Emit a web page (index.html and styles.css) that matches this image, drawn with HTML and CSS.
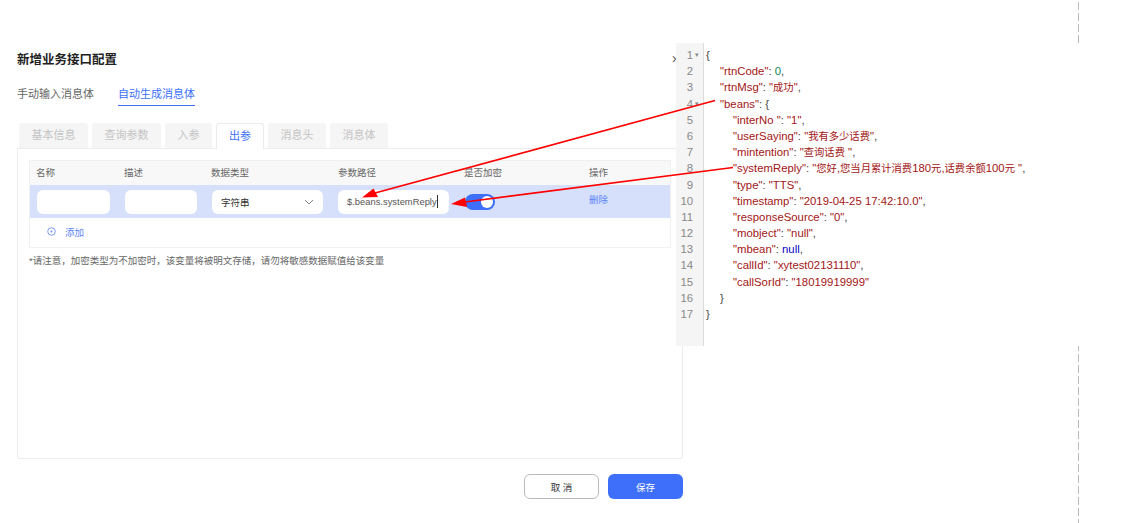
FILE: index.html
```html
<!DOCTYPE html>
<html lang="zh">
<head>
<meta charset="utf-8">
<title>新增业务接口配置</title>
<link rel="stylesheet" href="styles.css">
</head>
<body>
<div class="page">
  <main class="dialog">
    <h1 class="title">新增业务接口配置</h1>
    <nav class="mode-tabs">
      <span class="mode-tab">手动输入消息体</span>
      <span class="mode-tab active">自动生成消息体</span>
    </nav>
    <div class="step-tabs">
      <span class="step w69">基本信息</span>
      <span class="step w69">查询参数</span>
      <span class="step w47">入参</span>
      <span class="step w48 current">出参</span>
      <span class="step w58">消息头</span>
      <span class="step w58">消息体</span>
    </div>
    <section class="card">
      <div class="table">
        <div class="row head">
          <span class="cell">名称</span><span class="cell">描述</span><span class="cell">数据类型</span><span class="cell">参数路径</span><span class="cell">是否加密</span><span class="cell">操作</span>
        </div>
        <div class="row body-row">
          <span class="cell"><span class="input w73"></span></span>
          <span class="cell"><span class="input w72"></span></span>
          <span class="cell"><span class="input select">字符串<svg class="chev" width="10" height="6" viewBox="0 0 10 6"><path d="M1 1l4 4 4-4" fill="none" stroke="#888" stroke-width="1"/></svg></span></span>
          <span class="cell"><span class="input path">$.beans.systemReply<i class="caret"></i></span></span>
          <span class="cell"><span class="toggle"><i class="knob"></i></span></span>
          <span class="cell link">删除</span>
        </div>
        <div class="add-row">
          <svg width="9" height="9" viewBox="0 0 9 9"><circle cx="4.5" cy="4.5" r="3.8" fill="none" stroke="#7d9cf5" stroke-width="1"/><circle cx="4.5" cy="4.5" r="1.1" fill="#7d9cf5"/></svg>
          <span class="link">添加</span>
        </div>
      </div>
      <p class="note">*请注意，加密类型为不加密时，该变量将被明文存储，请勿将敏感数据赋值给该变量</p>
    </section>
    <div class="actions">
      <button class="btn ghost">取 消</button>
      <button class="btn primary">保存</button>
    </div>
  </main>
  <div class="divider"></div>
</div>

<span class="close">›</span>

<aside class="code">
  <div class="gutter">
    <span>1<i class="fold">▾</i></span><span>2</span><span>3</span><span>4<i class="fold">▾</i></span><span>5</span><span>6</span><span>7</span><span>8</span><span>9</span><span>10</span><span>11</span><span>12</span><span>13</span><span>14</span><span>15</span><span>16</span><span>17</span>
  </div>
  <div class="lines">
    <div class="ln">{</div>
    <div class="ln i1"><b>"rtnCode"</b>: <em class="num">0</em>,</div>
    <div class="ln i1"><b>"rtnMsg"</b>: <b>"<u>成功</u>"</b>,</div>
    <div class="ln i1"><b>"beans"</b>: {</div>
    <div class="ln i2"><b>"interNo "</b>: <b>"1"</b>,</div>
    <div class="ln i2"><b>"userSaying"</b>: <b>"<u>我有多少话费</u>"</b>,</div>
    <div class="ln i2"><b>"mintention"</b>: <b>"<u>查询话费</u> "</b>,</div>
    <div class="ln i2"><b>"systemReply"</b>: <b>"<u>您好</u>,<u>您当月累计消费</u>180<u>元</u>,<u>话费余额</u>100<u>元</u> "</b>,</div>
    <div class="ln i2"><b>"type"</b>: <b>"TTS"</b>,</div>
    <div class="ln i2"><b>"timestamp"</b>: <b>"2019-04-25 17:42:10.0"</b>,</div>
    <div class="ln i2"><b>"responseSource"</b>: <b>"0"</b>,</div>
    <div class="ln i2"><b>"mobject"</b>: <b>"null"</b>,</div>
    <div class="ln i2"><b>"mbean"</b>: <em class="kw">null</em>,</div>
    <div class="ln i2"><b>"callId"</b>: <b>"xytest02131110"</b>,</div>
    <div class="ln i2"><b>"callSorId"</b>: <b>"18019919999"</b></div>
    <div class="ln i1">}</div>
    <div class="ln">}</div>
  </div>
</aside>

<svg class="arrows" width="1147" height="523" viewBox="0 0 1147 523">
  <path d="M715 100.5L375 193" stroke="#f00" stroke-width="1.7" fill="none"/>
  <path d="M362 197.5L373.500 188.500L378 197Z" fill="#f00"/>
  <path d="M733 167.5L465 202" stroke="#f00" stroke-width="1.7" fill="none"/>
  <path d="M451 204L465 197.500L467 207Z" fill="#f00"/>
</svg>
</body>
</html>
```
FILE: styles.css
```css
* { box-sizing: border-box; }
html, body { margin: 0; padding: 0; height: 523px; overflow: hidden; background: #fff; }
body { font-family: "Liberation Sans", "Noto Sans CJK SC", sans-serif; color: #333; font-size: 9.5px; position: relative; }

.page { display: flex; height: 523px; }
.dialog { width: 666px; margin-left: 17px; flex: none; }
.divider {
  width: 1px; margin-left: 395px; flex: none;
  background: repeating-linear-gradient(to bottom, transparent 0 2px, #bbb 2px 10px, transparent 10px 11px);
}

.title { margin: 52px 0 0; font-size: 12.5px; line-height: 16px; font-weight: 700; color: #222; }

.mode-tabs { display: flex; gap: 24px; margin-top: 18px; }
.mode-tab { font-size: 11px; line-height: 16px; padding-bottom: 3px; color: #666; }
.mode-tab.active { color: #3d6ffb; border-bottom: 1px solid #3d6ffb; }

.step-tabs { display: flex; gap: 4px; margin: 17px 0 0 2px; height: 25px; align-items: flex-end; }
.step {
  height: 25px; line-height: 25px; text-align: center; font-size: 11px; color: #c4c4c4;
  background: #f5f5f5; border-radius: 3px 3px 0 0;
}
.step.current { background: #fff; color: #3d6ffb; border: 1px solid #ececec; border-bottom: 0; height: 26px; margin-bottom: -1px; position: relative; z-index: 1; }
.w69 { width: 69px; }
.w47 { width: 47px; }
.w48 { width: 48px; }
.w58 { width: 58px; }

.card { height: 311px; border: 1px solid #ececec; border-radius: 0 0 3px 3px; padding: 11px 11px 0; }

.table { width: 642px; border: 1px solid #f0f0f0; }
.row { display: grid; grid-template-columns: 87px 87px 127px 126px 125px 88px; }
.head { height: 24px; background: #f8f8f8; color: #666; align-items: center; }
.head .cell { padding-left: 7px; line-height: 24px; }
.head .cell:first-child { padding-left: 6px; }
.body-row { height: 33px; background: #d6e0fb; align-items: center; }
.body-row .cell { padding-left: 7px; }
.body-row .cell:nth-child(2), .body-row .cell:nth-child(3), .body-row .cell:nth-child(5) { padding-left: 8px; }

.input { display: flex; align-items: center; height: 24px; background: #fff; border-radius: 6px; }
.w73 { width: 73px; }
.w72 { width: 72px; }
.select { width: 111px; padding: 0 9px; color: #333; justify-content: space-between; }
.path { width: 111px; padding-left: 9px; color: #555; font-size: 9.4px; white-space: nowrap; }
.caret { display: inline-block; width: 1px; height: 13px; background: #333; margin-left: 0; }

.toggle { display: block; position: relative; width: 30px; height: 16px; border-radius: 8px; background: #3d6ffb; }
.knob { position: absolute; right: 2px; top: 2px; width: 12px; height: 12px; border-radius: 50%; background: #fff; }

.link { color: #5d85f7; }
.body-row .link { position: relative; top: -3px; }
.add-row { display: flex; align-items: center; gap: 9px; height: 29px; padding: 0 0 2px 17px; }

.note { margin: 7px 0 0; line-height: 12px; color: #666; }

.actions { display: flex; justify-content: flex-end; gap: 9px; margin-top: 15px; }
.btn { width: 75px; height: 25px; border-radius: 6px; font-family: inherit; font-size: 9.5px; padding: 0; }
.ghost { background: #fff; border: 1px solid #bbb; color: #333; }
.primary { background: #3d6ffb; border: 0; color: #fff; }

.close { position: absolute; left: 672px; top: 50px; font-size: 14px; line-height: 16px; color: #555; }

.code { position: absolute; left: 676px; top: 43px; width: 410px; height: 303px; background: #fff; display: flex; font-size: 11.35px; }
.gutter { width: 28px; flex: none; background: #f5f5f5; border-right: 1px solid #ddd; padding: 4px 10px 0 0; color: #888; display: flex; flex-direction: column; align-items: flex-end; }
.gutter span { display: block; height: 16.2px; line-height: 16.2px; position: relative; }
.fold { position: absolute; left: 100%; margin-left: 2px; font-style: normal; font-size: 7px; color: #888; }
.lines { padding: 4px 0 0 2px; }
.ln { height: 16.2px; line-height: 16.2px; white-space: nowrap; color: #444; }
.i1 { padding-left: 14px; }
.i2 { padding-left: 27px; }
.ln b { font-weight: 400; color: #a31515; }
.ln u { text-decoration: none; font-size: 10.3px; }
.num { font-style: normal; color: #098658; }
.kw { font-style: normal; color: #0000c8; }

.arrows { position: absolute; left: 0; top: 0; pointer-events: none; }
```
